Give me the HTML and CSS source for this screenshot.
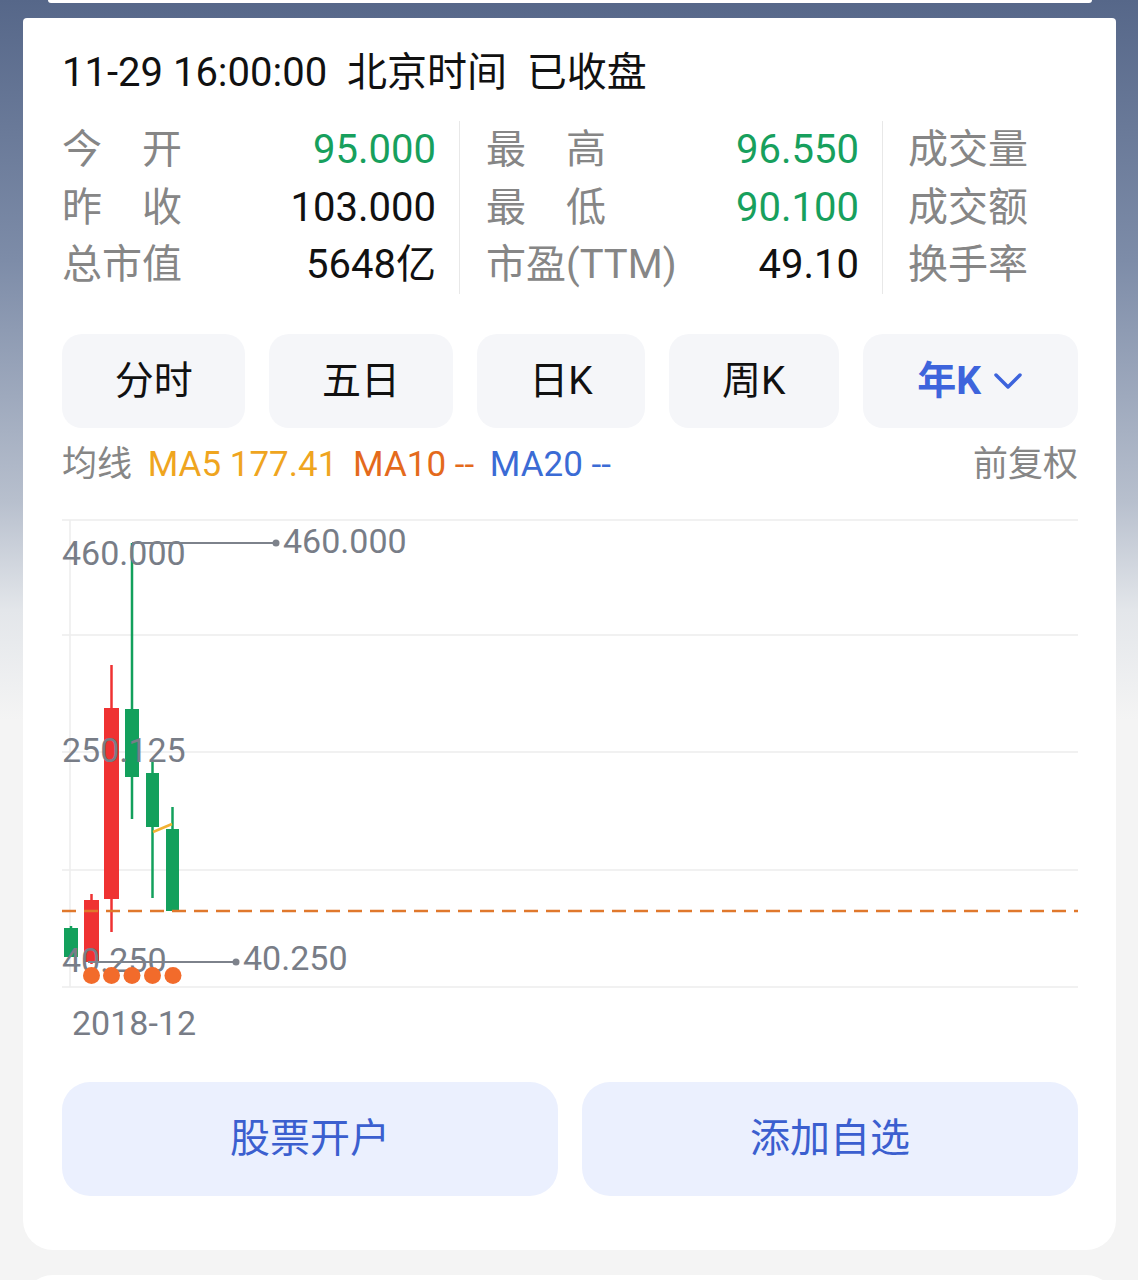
FILE: index.html
```html
<!DOCTYPE html>
<html lang="zh-CN">
<head>
    <meta charset="UTF-8">
    <meta name="viewport" content="width=device-width, initial-scale=1.0">
    <title>行情</title>
    <link rel="stylesheet" href="styles.css">
</head>
<body>
    <div class="prev-card"></div>

    <div class="card">
        <div class="quote-time">11-29 16:00:00&nbsp; 北京时间&nbsp; 已收盘</div>

        <div class="stats">
            <div class="stat-col">
                <div class="stat-row"><span class="label">今　开</span><span class="value up">95.000</span></div>
                <div class="stat-row"><span class="label">昨　收</span><span class="value">103.000</span></div>
                <div class="stat-row"><span class="label">总市值</span><span class="value">5648亿</span></div>
            </div>
            <div class="stat-col">
                <div class="stat-row"><span class="label">最　高</span><span class="value up">96.550</span></div>
                <div class="stat-row"><span class="label">最　低</span><span class="value up">90.100</span></div>
                <div class="stat-row"><span class="label">市盈(TTM)</span><span class="value">49.10</span></div>
            </div>
            <div class="stat-col last">
                <div class="stat-row"><span class="label">成交量</span><span class="value"></span></div>
                <div class="stat-row"><span class="label">成交额</span><span class="value"></span></div>
                <div class="stat-row"><span class="label">换手率</span><span class="value"></span></div>
            </div>
        </div>

        <div class="tabs">
            <div class="tab">分时</div>
            <div class="tab">五日</div>
            <div class="tab">日K</div>
            <div class="tab">周K</div>
            <div class="tab active">年K
                <svg class="chevron" width="30" height="18" viewBox="0 0 30 18">
                    <path d="M3 3 L15 15 L27 3" fill="none" stroke="#3d64dc" stroke-width="3.5" stroke-linecap="round" stroke-linejoin="round"/>
                </svg>
            </div>
        </div>

        <div class="ma-row">
            <div class="ma-list">
                <span class="ma-title">均线</span>
                <span class="ma5">MA5 177.41</span>
                <span class="ma10">MA10 --</span>
                <span class="ma20">MA20 --</span>
            </div>
            <span class="adjust">前复权</span>
        </div>

        <svg class="chart" viewBox="62 505 1016 545" width="1016" height="545">
            <!-- grid -->
            <g stroke="#ececec" stroke-width="1.5">
                <line x1="62" y1="520" x2="1078" y2="520"/>
                <line x1="62" y1="635" x2="1078" y2="635"/>
                <line x1="62" y1="752" x2="1078" y2="752"/>
                <line x1="62" y1="870" x2="1078" y2="870"/>
                <line x1="62" y1="987" x2="1078" y2="987"/>
                <line x1="70" y1="520" x2="70" y2="987"/>
            </g>

            <!-- candles -->
            <g stroke-width="2.5">
                <line x1="71" y1="926" x2="71" y2="957" stroke="#13a05c"/>
                <rect x="64" y="928" width="14" height="29" fill="#13a05c"/>

                <line x1="91.5" y1="894" x2="91.5" y2="964" stroke="#ef3232"/>
                <rect x="84" y="900" width="15" height="62" fill="#ef3232"/>

                <line x1="111.5" y1="665" x2="111.5" y2="932" stroke="#ef3232"/>
                <rect x="104" y="708" width="15" height="191" fill="#ef3232"/>

                <line x1="132" y1="543" x2="132" y2="819" stroke="#13a05c"/>
                <rect x="125" y="709" width="14" height="68" fill="#13a05c"/>

                <line x1="152.5" y1="760" x2="152.5" y2="898" stroke="#13a05c"/>
                <rect x="146" y="773" width="13" height="54" fill="#13a05c"/>

                <line x1="172.5" y1="807" x2="172.5" y2="911" stroke="#13a05c"/>
                <rect x="166" y="829" width="13" height="82" fill="#13a05c"/>
            </g>

            <line x1="153" y1="832" x2="172" y2="824" stroke="#f2b233" stroke-width="2.5"/>
            <line x1="62" y1="911" x2="1078" y2="911" stroke="#e0782c" stroke-width="2.5" stroke-dasharray="14 8"/>

            <!-- axis labels -->
            <g class="axis-text">
                <text x="62" y="565">460.000</text>
                <text x="62" y="762">250.125</text>
                <text x="62" y="972">40.250</text>
                <text x="72" y="1035">2018-12</text>
            </g>

            <!-- high / low markers -->
            <g stroke="#7d828b" stroke-width="2">
                <line x1="132" y1="543" x2="276" y2="543"/>
                <line x1="88" y1="962" x2="236" y2="962"/>
            </g>
            <circle cx="276" cy="543" r="3.5" fill="#7d828b"/>
            <circle cx="236" cy="962" r="3.5" fill="#7d828b"/>
            <g class="axis-text">
                <text x="283" y="553">460.000</text>
                <text x="243" y="970">40.250</text>
            </g>

            <!-- event dots -->
            <g fill="#f26b2b">
                <circle cx="91.5" cy="975.5" r="8.5"/>
                <circle cx="111.5" cy="975.5" r="8.5"/>
                <circle cx="132" cy="975.5" r="8.5"/>
                <circle cx="152.5" cy="975.5" r="8.5"/>
                <circle cx="173" cy="975.5" r="8.5"/>
            </g>
        </svg>

        <div class="actions">
            <div class="action-btn">股票开户</div>
            <div class="action-btn">添加自选</div>
        </div>
    </div>

    <div class="next-card"></div>
</body>
</html>
```

FILE: styles.css
```css
body {
    margin: 0;
    font-family: Roboto, "Noto Sans CJK SC", sans-serif;
    background: linear-gradient(180deg, #566789 0, #7d8ca8 260px, #b7bfcd 500px, #e3e6ea 610px, #f4f4f4 720px, #f4f4f4 100%);
    min-height: 1280px;
    overflow: hidden;
}
.prev-card {
    height: 3px;
    margin: 0 46px 0 48px;
    background-color: #fff;
    border-radius: 0 0 20px 20px;
}
.card {
    margin: 15px 22px 0 23px;
    padding: 33px 38px 54px 39px;
    background-color: #fff;
    border-radius: 4px 4px 30px 30px;
}
.next-card {
    height: 30px;
    margin: 25px 22px 0 23px;
    background-color: #fff;
    border-radius: 30px 30px 0 0;
}

.quote-time {
    font-size: 40px;
    line-height: 44px;
    color: #111;
}

/* stats grid */
.stats {
    display: flex;
    margin-top: 26px;
}
.stat-col {
    box-sizing: border-box;
    display: flex;
    flex-direction: column;
    border-right: 1px solid #e8e8e8;
}
.stat-col:first-child {
    width: 398px;
    padding-right: 23px;
}
.stat-col:nth-child(2) {
    width: 423px;
    padding: 0 23px 0 26px;
}
.stat-col.last {
    flex: 1;
    padding-left: 25px;
    border-right: none;
}
.stat-row {
    display: flex;
    justify-content: space-between;
    font-size: 40px;
    line-height: 57.5px;
    white-space: nowrap;
}
.label {
    color: #868686;
}
.value {
    color: #111;
}
.value.up {
    color: #17a05d;
}

/* period tabs */
.tabs {
    display: grid;
    grid-template-columns: 183fr 183fr 168fr 169fr 215fr;
    gap: 24px;
    margin-top: 40px;
}
.tab {
    box-sizing: border-box;
    height: 94px;
    padding-bottom: 7px;
    display: flex;
    align-items: center;
    justify-content: center;
    background-color: #f5f6f9;
    border-radius: 20px;
    font-size: 39px;
    color: #111;
}
.tab.active {
    color: #3d64dc;
    font-weight: bold;
}
.chevron {
    margin: 7px 0 0 12px;
}

/* moving averages */
.ma-row {
    display: flex;
    justify-content: space-between;
    margin-top: 17px;
    font-size: 35px;
    line-height: 40px;
}
.ma-list span {
    margin-right: 7px;
}
.ma-title {
    color: #868686;
}
.ma5 {
    color: #efa51f;
}
.ma10 {
    color: #e46a1c;
}
.ma20 {
    color: #3b6bd5;
}
.adjust {
    color: #868686;
}

/* chart */
.chart {
    display: block;
    margin-top: 20px;
}
.axis-text {
    font-family: Roboto, sans-serif;
    font-size: 34px;
    fill: #787d87;
}

/* bottom actions */
.actions {
    display: flex;
    gap: 24px;
    margin-top: 32px;
}
.action-btn {
    box-sizing: border-box;
    flex: 1;
    height: 114px;
    padding-bottom: 7px;
    display: flex;
    align-items: center;
    justify-content: center;
    background-color: #ebf0fe;
    border-radius: 28px;
    font-size: 40px;
    color: #3b5fcf;
}
```
